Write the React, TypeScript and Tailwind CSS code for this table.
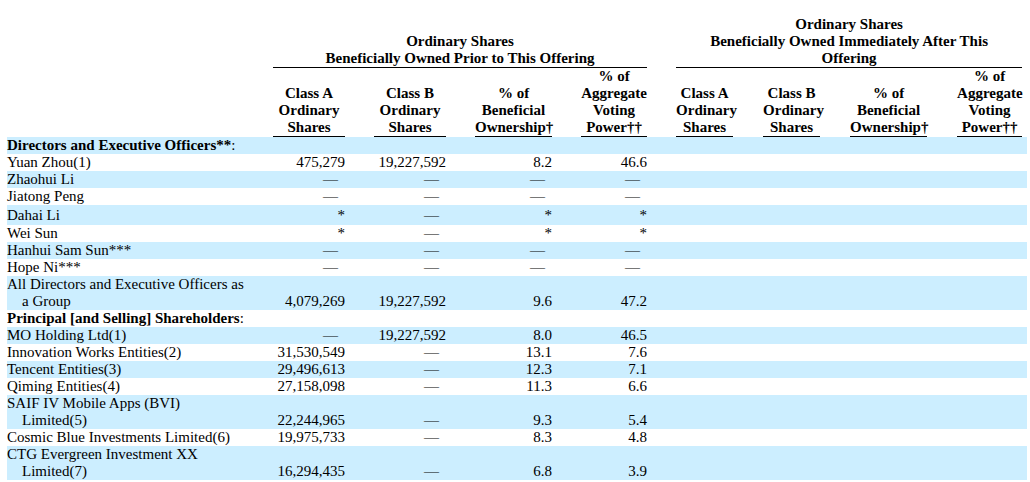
import React from "react";

type Cell = string;
type Row = {
  name: React.ReactNode;
  values?: [Cell, Cell, Cell, Cell];
  section?: boolean;
  tall?: boolean;
};

const ROWS: Row[] = [
  {
    name: (
      <>
        <b>Directors and Executive Officers**</b>:
      </>
    ),
    section: true,
  },
  { name: "Yuan Zhou(1)", values: ["475,279", "19,227,592", "8.2", "46.6"] },
  { name: "Zhaohui Li", values: ["—", "—", "—", "—"] },
  { name: "Jiatong Peng", values: ["—", "—", "—", "—"] },
  { name: "Dahai Li", values: ["*", "—", "*", "*"], tall: true },
  { name: "Wei Sun", values: ["*", "—", "*", "*"] },
  { name: "Hanhui Sam Sun***", values: ["—", "—", "—", "—"] },
  { name: "Hope Ni***", values: ["—", "—", "—", "—"] },
  {
    name: (
      <>
        All Directors and Executive Officers as
        <br />a Group
      </>
    ),
    values: ["4,079,269", "19,227,592", "9.6", "47.2"],
  },
  {
    name: (
      <>
        <b>Principal [and Selling] Shareholders</b>:
      </>
    ),
    section: true,
  },
  { name: "MO Holding Ltd(1)", values: ["—", "19,227,592", "8.0", "46.5"] },
  { name: "Innovation Works Entities(2)", values: ["31,530,549", "—", "13.1", "7.6"] },
  { name: "Tencent Entities(3)", values: ["29,496,613", "—", "12.3", "7.1"] },
  { name: "Qiming Entities(4)", values: ["27,158,098", "—", "11.3", "6.6"] },
  {
    name: (
      <>
        SAIF IV Mobile Apps (BVI)
        <br />
        Limited(5)
      </>
    ),
    values: ["22,244,965", "—", "9.3", "5.4"],
  },
  {
    name: "Cosmic Blue Investments Limited(6)",
    values: ["19,975,733", "—", "8.3", "4.8"],
  },
  {
    name: (
      <>
        CTG Evergreen Investment XX
        <br />
        Limited(7)
      </>
    ),
    values: ["16,294,435", "—", "6.8", "3.9"],
  },
];

// column widths: name, then data/gap pairs, then trailing pad
const COLS = [266, 72, 29, 72, 29, 77, 29, 66, 29, 57, 30, 57, 30, 77, 30, 65, 5];

function ColHead({ children }: { children: React.ReactNode }) {
  return (
    <th className="border-b border-black p-0 text-center align-bottom font-bold whitespace-nowrap">
      {children}
    </th>
  );
}

function Gap() {
  return <td className="p-0" />;
}

function Value({ v }: { v: string }) {
  return (
    <td className={v === "—" ? "p-0 pr-[7px] text-right" : "p-0 text-right"}>
      {v}
    </td>
  );
}

export default function App() {
  return (
    <div className="min-h-screen bg-white pt-[16px] pl-[7px] font-['Liberation_Serif','Times_New_Roman',serif] text-[15px] leading-[17px] text-black">
      <table className="w-[1020px] table-fixed border-separate border-spacing-0">
        <colgroup>
          {COLS.map((w, i) => (
            <col key={i} style={{ width: w }} />
          ))}
        </colgroup>
        <thead>
          <tr>
            <th className="p-0" />
            <th
              colSpan={7}
              className="border-b border-black p-0 text-center align-bottom font-bold"
            >
              Ordinary Shares
              <br />
              Beneficially Owned Prior to This Offering
            </th>
            <th className="p-0" />
            <th
              colSpan={7}
              className="border-b border-black p-0 text-center align-bottom font-bold"
            >
              Ordinary Shares
              <br />
              Beneficially Owned Immediately After This
              <br />
              Offering
            </th>
            <th className="p-0" />
          </tr>
          <tr>
            <th className="p-0" />
            <ColHead>
              Class A<br />Ordinary<br />Shares
            </ColHead>
            <Gap />
            <ColHead>
              Class B<br />Ordinary<br />Shares
            </ColHead>
            <Gap />
            <ColHead>
              % of<br />Beneficial<br />Ownership†
            </ColHead>
            <Gap />
            <ColHead>
              % of<br />Aggregate<br />Voting<br />Power††
            </ColHead>
            <Gap />
            <ColHead>
              Class A<br />Ordinary<br />Shares
            </ColHead>
            <Gap />
            <ColHead>
              Class B<br />Ordinary<br />Shares
            </ColHead>
            <Gap />
            <ColHead>
              % of<br />Beneficial<br />Ownership†
            </ColHead>
            <Gap />
            <ColHead>
              % of<br />Aggregate<br />Voting<br />Power††
            </ColHead>
            <Gap />
          </tr>
        </thead>
        <tbody>
          {ROWS.map((row, i) => (
            <tr
              key={i}
              className={
                (i % 2 === 0 ? "bg-[#cceeff] " : "bg-white ") +
                (row.tall ? "h-[20px] [&>td]:align-middle" : "[&>td]:align-bottom")
              }
            >
              <td className="p-0 pl-[15px] indent-[-15px] whitespace-nowrap">
                {row.name}
              </td>
              {row.values ? (
                <>
                  <Value v={row.values[0]} />
                  <Gap />
                  <Value v={row.values[1]} />
                  <Gap />
                  <Value v={row.values[2]} />
                  <Gap />
                  <Value v={row.values[3]} />
                  <td colSpan={9} className="p-0" />
                </>
              ) : (
                <td colSpan={16} className="p-0" />
              )}
            </tr>
          ))}
        </tbody>
      </table>
    </div>
  );
}
